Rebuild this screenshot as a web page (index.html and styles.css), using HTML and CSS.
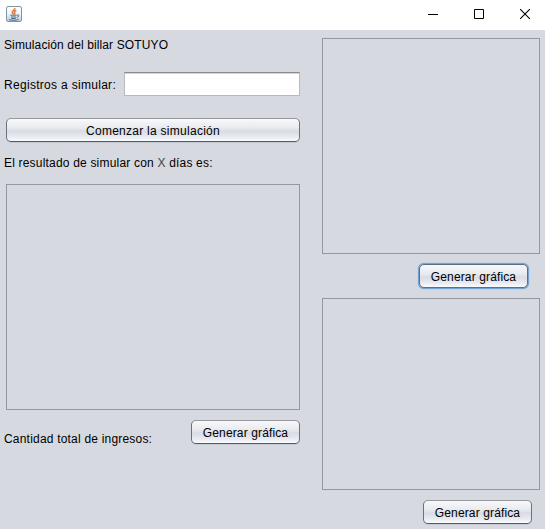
FILE: index.html
```html
<!DOCTYPE html>
<html lang="es">
<head>
<meta charset="utf-8">
<title>Simulación</title>
<link rel="stylesheet" href="styles.css">
</head>
<body>
<header class="titlebar">
  <svg class="app-icon" width="16" height="16" viewBox="0 0 16 16">
    <defs><linearGradient id="tile" x1="0" y1="0" x2="0" y2="1"><stop offset="0" stop-color="#fff"/><stop offset=".45" stop-color="#f3f5f7"/><stop offset="1" stop-color="#b9c9d6"/></linearGradient></defs>
    <rect x=".5" y=".5" width="15" height="15" rx="1.5" fill="url(#tile)" stroke="#8296aa"/>
    <path d="M8.800 2C9.500 4 6 4.600 6.300 6.300c.1.8.9 1.200 1 2M10.300 4.500C8.500 5.300 8 6 8.700 6.900c.4.6.1 1-.4 1.400" fill="none" stroke="#e27a35" stroke-width="1.500"/>
    <path d="M4.300 9.200h6.400M5 11h5M5.300 12.500h4.400M3 13.600c2.500 1 7.500.9 9.500-.2M11 9c2.600-.6 2.300 2-.3 2.400" fill="none" stroke="#496f8e"/>
  </svg>
  <div class="window-controls">
    <svg width="10" height="10"><path d="M0 5.500h10" stroke="#000"/></svg>
    <svg width="10" height="10"><path d="M.5.500h9v9h-9z" fill="none" stroke="#000"/></svg>
    <svg width="10" height="10"><path d="M0 0l10 10M10 0L0 10" stroke="#000" stroke-width="1.100"/></svg>
  </div>
</header>
<main class="content">
  <section class="left">
    <div class="label heading"><span class="t-title">Simulación del billar SOTUYO</span></div>
    <div class="field-row">
      <label class="label" for="registros"><span class="t-reg">Registros a simular:</span></label>
      <input class="field" id="registros" type="text">
    </div>
    <button class="btn wide"><span class="t-start">Comenzar la simulación</span></button>
    <div class="label result"><span class="t-result">El resultado de simular con <span class="dim">X</span> días es:</span></div>
    <div class="panel panel-left"></div>
    <div class="total-row">
      <div class="label total"><span class="t-total">Cantidad total de ingresos:</span></div>
      <button class="btn"><span class="t-gen">Generar gráfica</span></button>
    </div>
  </section>
  <section class="right">
    <div class="panel panel-top"></div>
    <button class="btn focused"><span class="t-gen">Generar gráfica</span></button>
    <div class="panel panel-bottom"></div>
    <button class="btn last"><span class="t-gen">Generar gráfica</span></button>
  </section>
</main>
</body>
</html>
```
FILE: styles.css
```css
* { box-sizing: border-box; }
body {
  margin: 0;
  height: 529px;
  overflow: hidden;
  background: #d6d9e0;
  color: #000;
  font: 12px/16px "Liberation Sans", Arial, sans-serif;
}
.titlebar {
  height: 30px;
  padding: 0 15px 2px 6px;
  display: flex;
  align-items: center;
  justify-content: space-between;
  background: #fff;
}
.window-controls { display: flex; gap: 36px; }
svg { display: block; }
.content { display: flex; gap: 22px; height: 499px; }
.left { width: 300px; padding: 7px 0 0 6px; }
.right { width: 218px; padding-top: 8px; display: flex; flex-direction: column; align-items: flex-end; }
.label { margin-left: -2px; white-space: nowrap; }
.heading { height: 16px; margin-bottom: 19px; }
.field-row { display: flex; justify-content: space-between; align-items: center; height: 24px; }
.field-row .label { padding-top: 2px; }
.t-title { letter-spacing: .12px; }
.t-reg { letter-spacing: .3px; }
.t-start { letter-spacing: .27px; }
.t-result { letter-spacing: .19px; }
.t-total { letter-spacing: .2px; }
.t-gen { letter-spacing: .13px; }
.field {
  width: 176px;
  height: 24px;
  border: 1px solid #b8bac0;
  border-top-color: #8a8c92;
  background: #fff;
  box-shadow: inset 0 1px 0 #d5d5d8;
  padding: 0 5px;
  font: inherit;
  outline: none;
}
.btn {
  display: flex;
  align-items: center;
  justify-content: center;
  flex: none;
  width: 109px;
  height: 24px;
  margin: 0;
  padding: 2px 0 0;
  border: 1px solid #6c717c;
  border-top-color: #95989f;
  border-bottom-color: #545965;
  border-radius: 5px;
  background: linear-gradient(#f9f9fb 0%, #e8eaee 40%, #d9dce3 55%, #e5e8ee 78%, #f9fbff 100%);
  box-shadow: 0 1px 0 #c5c9d1;
  color: #000;
  font: inherit;
  white-space: nowrap;
}
.wide { width: 294px; margin-top: 22px; }
.result { height: 16px; margin-top: 13px; }
.dim { color: #444; }
.panel { border: 1px solid #9297a1; }
.panel-left { width: 294px; height: 226px; margin-top: 13px; }
.total-row { display: flex; justify-content: space-between; margin-top: 10px; }
.total { padding-top: 11px; }
.panel-top { width: 218px; height: 216px; }
.focused { margin: 10px 12px 10px 0; border-color: #58708a; box-shadow: 0 0 0 1px #73a4d1, 0 0 1px 1px #73a4d1; }
.panel-bottom { width: 218px; height: 192px; }
.last { margin: 10px 8px 0 0; }
```
